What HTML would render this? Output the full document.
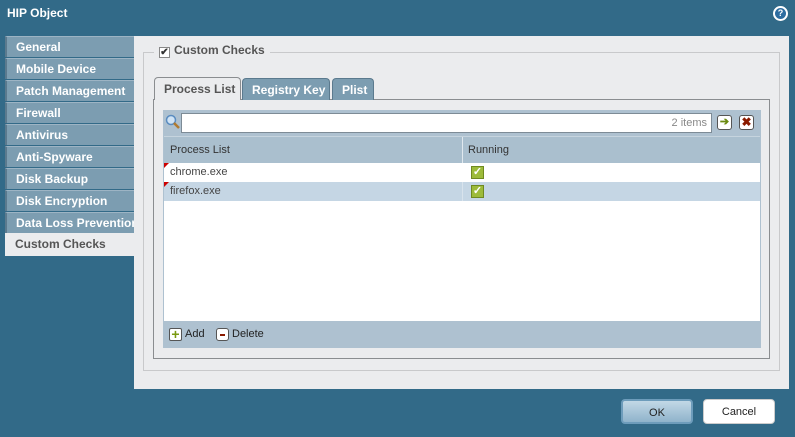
<!DOCTYPE html>
<html><head><style>
*{box-sizing:border-box;margin:0;padding:0}
body{width:795px;height:437px;background:#326a88;font-family:"Liberation Sans",sans-serif;font-size:12px;position:relative;overflow:hidden}
.abs{position:absolute}
.title{left:7px;top:6px;color:#fff;font-weight:bold;font-size:12px}
.help{left:773px;top:6px;width:15px;height:15px;border-radius:50%;background:#fff;}
.help div{position:absolute;left:2px;top:2px;width:11px;height:11px;border-radius:50%;background:#2e6da0;color:#fff;font-size:9px;font-weight:bold;text-align:center;line-height:11px}
.panel{left:134px;top:36px;width:655px;height:353px;background:#ebecee}
.lt{left:5px;width:129px;height:21px;background:#7c9db1;color:#fff;font-weight:bold;font-size:12px;padding:3px 0 0 9px;border-left:2px solid #5b7a8e;border-top:1px solid #9db4c4;white-space:nowrap;overflow:hidden}
.lt.sel{background:#ebecee;color:#555;height:23px;border:none;padding-left:10px}
.fs{left:143px;top:52px;width:637px;height:319px;border:1px solid #c8c9cb}
.legend{left:154px;top:43px;background:#ebecee;padding:0 5px;color:#555;font-weight:bold;font-size:12px}
.cb{display:inline-block;width:11px;height:11px;border:1px solid #888;background:#fff;vertical-align:-1px;margin-right:4px;font-size:10px;line-height:9px;text-align:center;color:#333}
.tab{top:78px;height:22px;background:#7c9db1;color:#fff;font-weight:bold;border:1px solid #5b7a8e;border-bottom:none;border-radius:4px 4px 0 0;padding:4px 0 0 9px}
.tp{left:153px;top:99px;width:617px;height:260px;border:1px solid #8a8d90;background:#ebecee}
.grid{left:163px;top:110px;width:598px;height:238px;background:#fff;border:1px solid #aec1d0}
.tb{left:163px;top:110px;width:598px;height:26px;background:#aec1d0}
.inp{left:181px;top:113px;width:531px;height:20px;background:#fff;border:1px solid #7d8b96;text-align:right;color:#888;padding:3px 4px 0 0;font-size:11px}
.hdr{left:164px;top:136px;width:596px;height:27px;background:#aabfce;border-top:1px solid #c6d4de;color:#333;font-size:11px}
.row{left:164px;width:596px;height:19px;color:#444;font-size:11px}
.chk{width:13px;height:13px;background:#9dbb3a;border:1px solid #6f8a20;color:#fff;font-size:11px;line-height:11px;text-align:center;font-weight:bold}
.tri{width:0;height:0;border-top:5px solid #c00;border-right:5px solid transparent}
.ft{left:164px;top:321px;width:596px;height:26px;background:#aec1d0;color:#222;font-size:11px}
.btn{top:399px;height:25px;border-radius:4px;text-align:center;line-height:24px;color:#222;font-size:11px}
</style></head><body>
<div class="abs title">HIP Object</div>
<div class="abs help"><div>?</div></div>
<div class="abs panel"></div>
<div class="abs lt" style="top:36px">General</div>
<div class="abs lt" style="top:58px">Mobile Device</div>
<div class="abs lt" style="top:80px">Patch Management</div>
<div class="abs lt" style="top:102px">Firewall</div>
<div class="abs lt" style="top:124px">Antivirus</div>
<div class="abs lt" style="top:146px">Anti-Spyware</div>
<div class="abs lt" style="top:168px">Disk Backup</div>
<div class="abs lt" style="top:190px">Disk Encryption</div>
<div class="abs lt" style="top:212px">Data Loss Prevention</div>
<div class="abs lt sel" style="top:233px;padding-top:4px">Custom Checks</div>
<div class="abs fs"></div>
<div class="abs legend"><span class="cb">✔</span>Custom Checks</div>
<div class="abs tp"></div>
<div class="abs tab" style="left:154px;width:87px;top:77px;height:23px;background:#ebecee;color:#555;border-color:#8a8d90">Process List</div>
<div class="abs tab" style="left:242px;width:88px">Registry Key</div>
<div class="abs tab" style="left:332px;width:42px">Plist</div>
<div class="abs grid"></div>
<div class="abs tb"></div>
<svg class="abs" style="left:165px;top:114px" width="16" height="17"><circle cx="6" cy="6" r="4.5" fill="#cfe3f5" stroke="#5a8cc0" stroke-width="1.5"/><line x1="9" y1="9" x2="14" y2="14" stroke="#b07a30" stroke-width="2.5"/></svg>
<div class="abs inp">2 items</div>
<div class="abs" style="left:717px;top:115px;width:15px;height:15px;border:1px solid #555;border-radius:3px;background:#fff;color:#6a8a10;font-size:11px;font-weight:bold;text-align:center;line-height:13px">➔</div>
<div class="abs" style="left:739px;top:115px;width:15px;height:15px;border:1px solid #555;border-radius:3px;background:#fff;color:#8b1a00;font-size:12px;font-weight:bold;text-align:center;line-height:13px">✖</div>
<div class="abs hdr"><span class="abs" style="left:6px;top:7px">Process List</span><span class="abs" style="left:298px;top:0;width:1px;height:26px;background:#e0e8ee"></span><span class="abs" style="left:304px;top:7px">Running</span></div>
<div class="abs row" style="top:163px;background:#fff"><div class="abs tri" style="left:0;top:0"></div><span class="abs" style="left:6px;top:3px">chrome.exe</span><div class="abs chk" style="left:307px;top:3px">✓</div></div>
<div class="abs row" style="top:182px;background:#c5d6e4"><div class="abs tri" style="left:0;top:0"></div><span class="abs" style="left:6px;top:3px">firefox.exe</span><span class="abs" style="left:298px;top:0;width:1px;height:19px;background:#d8e3ec"></span><div class="abs chk" style="left:307px;top:3px">✓</div></div>
<div class="abs ft">
<div class="abs" style="left:5px;top:7px;width:13px;height:13px;border:1px solid #555;border-radius:2px;background:#fff;color:#7a9a10;font-weight:bold;font-size:14px;line-height:11px;text-align:center">+</div>
<span class="abs" style="left:21px;top:7px">Add</span>
<div class="abs" style="left:52px;top:7px;width:13px;height:13px;border:1px solid #555;border-radius:3px;background:#fff"><div class="abs" style="left:3px;top:5px;width:5px;height:2px;background:#8b1a00"></div></div>
<span class="abs" style="left:68px;top:7px">Delete</span>
</div>
<div class="abs btn" style="left:621px;width:72px;background:linear-gradient(#c2d8e6,#8fb3cb);border:2px solid #6d9cbb">OK</div>
<div class="abs btn" style="left:703px;width:72px;background:#fff;border:1px solid #ccc">Cancel</div>
</body></html>
